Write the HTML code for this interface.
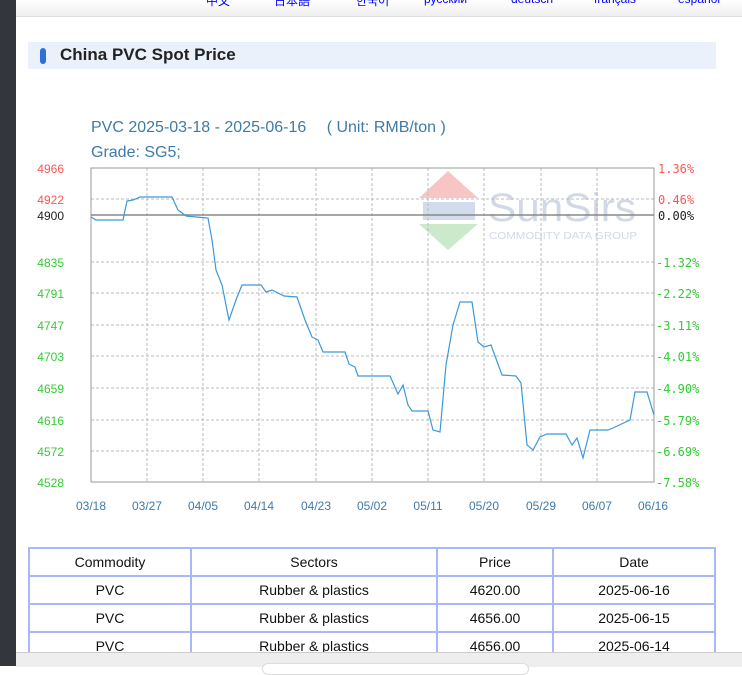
<!DOCTYPE html>
<html><head><meta charset="utf-8"><style>
body{margin:0;width:742px;height:666px;overflow:hidden;background:#fff;font-family:"Liberation Sans",Arial,sans-serif;position:relative}
.l{position:absolute;left:0;top:0;width:16px;height:666px;background:#33363d}
.top{position:absolute;left:16px;top:0;width:726px;height:16px;background:linear-gradient(#fff,#eeeeee);border-bottom:1px solid #ddd;font-size:12px;color:#00f;overflow:hidden}
.top span{position:absolute;top:-8px}
.hd{position:absolute;left:28px;top:42px;width:688px;height:27px;background:#eaf1fa}
.hd i{position:absolute;left:12px;top:6px;width:6px;height:16px;border-radius:3px;background:#2f6fd8}
.hd b{position:absolute;left:32px;top:3px;font-size:17px;color:#222}
table{position:absolute;left:28px;top:547px;width:688px;border-collapse:collapse;font-size:14px;color:#111}
td{border:2px solid #a8b8f8;text-align:center;height:26px;padding:0}
.bot{position:absolute;left:16px;top:652px;width:726px;height:14px;background:#eee;border-top:1px solid #ccc}
.bot div{position:absolute;left:246px;top:10px;width:265px;height:10px;background:#fff;border-radius:8px;border:1px solid #ddd}
</style></head><body>
<div class="l"></div>
<div class="top"><span style="left:190px">中文</span><span style="left:258px">日本語</span><span style="left:340px">한국어</span><span style="left:408px">русский</span><span style="left:495px">deutsch</span><span style="left:578px">français</span><span style="left:662px">español</span></div>
<div class="hd"><i></i><b>China PVC Spot Price</b></div>
<svg style="position:absolute;left:0;top:0" width="742" height="540" font-family="Liberation Sans, DejaVu Sans, sans-serif">
<text x="91" y="132" font-size="16" fill="#3f7ba8">PVC 2025-03-18 - 2025-06-16　 ( Unit: RMB/ton )</text>
<text x="91" y="157" font-size="16" fill="#3f7ba8">Grade: SG5;</text>
<g opacity="0.45">
<polygon points="448,171 419,198 478,198" fill="#f08080"/>
<polygon points="419,224 478,224 448,250" fill="#8fd08f"/>
<rect x="423" y="202" width="52" height="18" fill="#9db3d8"/>
<text x="488" y="221" font-size="40" textLength="148" lengthAdjust="spacingAndGlyphs" fill="#9aaac8">SunSirs</text>
<text x="489" y="239" font-size="10" textLength="148" lengthAdjust="spacingAndGlyphs" fill="#9aaac8">COMMODITY DATA GROUP</text>
</g>
<g stroke="#bbb" stroke-dasharray="3,2" fill="none">
<path d="M147 168V482M203 168V482M259 168V482M316 168V482M372 168V482M428 168V482M484 168V482M541 168V482M597 168V482M91 199H654M91 262H654M91 293H654M91 325H654M91 356H654M91 388H654M91 420H654M91 451H654"/>
</g>
<rect x="91" y="168" width="563" height="314" fill="none" stroke="#999"/>
<path d="M91 215H654" stroke="#888" stroke-width="1.5"/>
<polyline fill="none" stroke="#3a9ad9" stroke-width="1.2" points="91,217 96,220 123,220 127,201 133,200 140,197 172,197 178,210 186,216 208,218 212,240 216,270 222,285 229,320 236,300 242,285 261,285 266,292 272,290 284,296 297,297 305,320 312,337 318,340 323,352 345,352 349,364 355,367 358,376 390,376 398,394 403,385 408,405 412,411 428,411 433,430 440,432 446,365 453,325 460,302 472,302 478,342 484,347 491,345 502,375 516,376 521,383 527,445 533,450 540,437 547,434 566,434 572,445 577,438 583,458 590,430 608,430 613,428 630,420 635,392 647,392 654,415"/>
<g font-size="12" text-anchor="end">
<text x="64" y="173" fill="#f55">4966</text><text x="64" y="204" fill="#f55">4922</text><text x="64" y="220" fill="#222">4900</text>
<g fill="#3c3"><text x="64" y="267">4835</text><text x="64" y="298">4791</text><text x="64" y="330">4747</text><text x="64" y="361">4703</text><text x="64" y="393">4659</text><text x="64" y="425">4616</text><text x="64" y="456">4572</text><text x="64" y="487">4528</text></g>
</g>
<g font-size="12" font-family="DejaVu Sans Mono, monospace">
<text x="658" y="173" fill="#f55">1.36%</text><text x="658" y="204" fill="#f55">0.46%</text><text x="658" y="220" fill="#222">0.00%</text>
<g fill="#3c3"><text x="656" y="267">-1.32%</text><text x="656" y="298">-2.22%</text><text x="656" y="330">-3.11%</text><text x="656" y="361">-4.01%</text><text x="656" y="393">-4.90%</text><text x="656" y="425">-5.79%</text><text x="656" y="456">-6.69%</text><text x="656" y="487">-7.58%</text></g>
</g>
<g font-size="12" fill="#3f7ba8" text-anchor="middle">
<text x="91" y="510">03/18</text><text x="147" y="510">03/27</text><text x="203" y="510">04/05</text><text x="259" y="510">04/14</text><text x="316" y="510">04/23</text><text x="372" y="510">05/02</text><text x="428" y="510">05/11</text><text x="484" y="510">05/20</text><text x="541" y="510">05/29</text><text x="597" y="510">06/07</text><text x="653" y="510">06/16</text>
</g>
</svg>
<table>
<tr><td style="width:160px">Commodity</td><td style="width:244px">Sectors</td><td style="width:114px">Price</td><td>Date</td></tr>
<tr><td>PVC</td><td>Rubber &amp; plastics</td><td>4620.00</td><td>2025-06-16</td></tr>
<tr><td>PVC</td><td>Rubber &amp; plastics</td><td>4656.00</td><td>2025-06-15</td></tr>
<tr><td>PVC</td><td>Rubber &amp; plastics</td><td>4656.00</td><td>2025-06-14</td></tr>
</table>
<div class="bot"><div></div></div>
</body></html>
